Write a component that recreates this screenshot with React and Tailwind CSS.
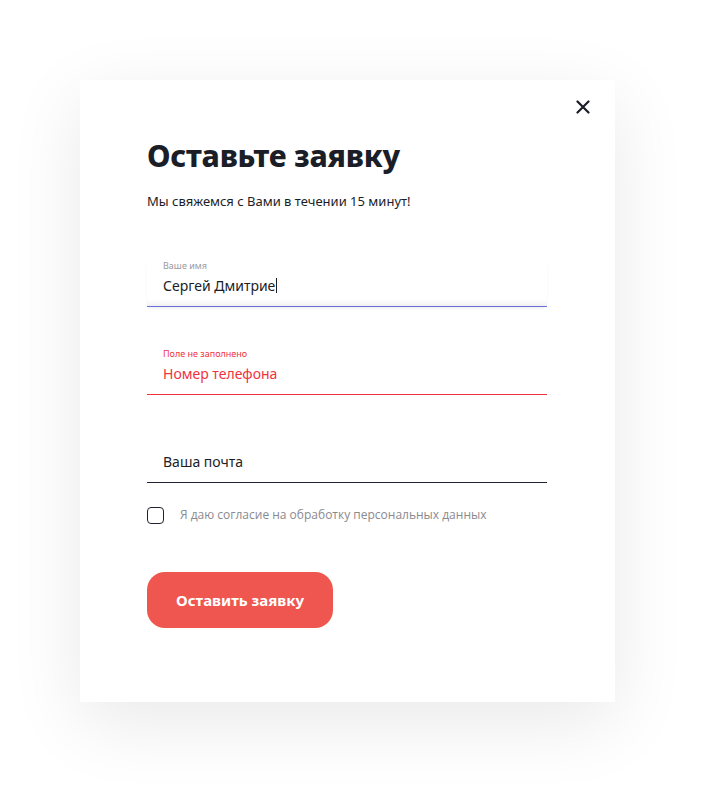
import { useState } from 'react';

const font = { fontFamily: '"Noto Sans", "Open Sans", sans-serif' };

const Field = ({ label, value, placeholder, state }) => {
  // state: 'focus' | 'error' | 'idle'
  const line =
    state === 'focus'
      ? 'border-[#6b6fd6] shadow-[inset_0_-7px_6px_-5px_rgba(0,0,0,0.08),0_2px_4px_-2px_rgba(0,0,0,0.12)]'
      : state === 'error'
      ? 'border-[#f0323f]'
      : 'border-[#1f2230]';
  const textColor = state === 'error' ? 'text-[#f0323f]' : 'text-[#1b1d27]';
  return (
    <div className={'border-b px-4 pb-[10px] ' + line}>
      <div className={'h-[14px] text-[9px] leading-[14px] ' + (state === 'error' ? 'text-[#f0323f]' : 'text-[#9a9aa0]')}>{label}</div>
      <div className={'mt-[3px] text-[14px] leading-[20px] ' + textColor}>
        {value || placeholder}
        {state === 'focus' && <span className="ml-[1px] inline-block h-[15px] w-[1px] translate-y-[2px] bg-[#1b1d27]" />}
      </div>
    </div>
  );
};

export default function App() {
  const [agree, setAgree] = useState(false);
  return (
    <div className="min-h-[803px] w-[715px] bg-white pt-[80px] pl-[80px]" style={font}>
      <div className="relative h-[622px] w-[535px] bg-white px-[67px] pt-[58px] shadow-[0_20px_70px_rgba(0,0,0,0.09)]">
        <button className="absolute top-[20px] right-[25px] text-[#1b1d27]" type="button" aria-label="Закрыть">
          <svg width="14" height="14" viewBox="0 0 14 14" fill="none" stroke="currentColor" strokeWidth="2.2" strokeLinecap="round">
            <path d="M1.5 1.5 12.5 12.5M12.5 1.5 1.5 12.5" />
          </svg>
        </button>
        <h1 className="text-[30px] font-extrabold leading-[36px] tracking-[-0.2px] text-[#1b1d27]">Оставьте заявку</h1>
        <p className="mt-[18px] text-[13px] leading-[18px] text-[#1b1d27]">Мы свяжемся с Вами в течении 15 минут!</p>
        <form className="mt-[49px] w-[400px]" onSubmit={(e) => e.preventDefault()}>
          <Field label="Ваше имя" value="Сергей Дмитрие" state="focus" />
          <div className="mt-[40px]">
            <Field label="Поле не заполнено" placeholder="Номер телефона" state="error" />
          </div>
          <div className="mt-[40px]">
            <Field label="" placeholder="Ваша почта" state="idle" />
          </div>
          <label className="mt-[23px] flex cursor-pointer items-center gap-4">
            <span
              className={'h-[17px] w-[17px] rounded-[4px] border-[1.5px] border-[#1f2230] ' + (agree ? 'bg-[#1f2230]' : 'bg-white')}
              onClick={() => setAgree(!agree)}
            />
            <span className="text-[12px] text-[#8a8a8f]" style={{ fontFamily: '"Open Sans", sans-serif' }}>
              Я даю согласие на обработку персональных данных
            </span>
          </label>
          <button
            type="submit"
            className="mt-[48px] h-[56px] w-[186px] rounded-[18px] bg-[#ef5650] text-[15px] font-bold text-white"
          >
            Оставить заявку
          </button>
        </form>
      </div>
    </div>
  );
}
